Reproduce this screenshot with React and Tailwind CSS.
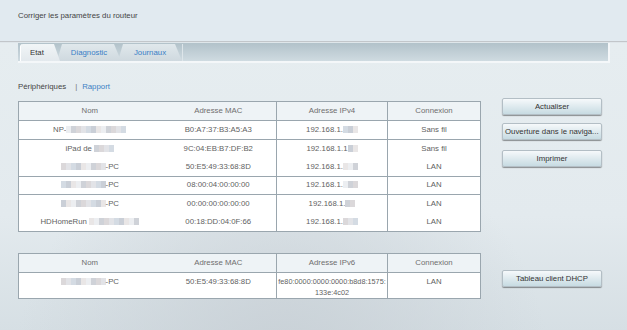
import React from "react";

const shades = [
    "bg-[#e2e3e7]",
    "bg-[#cfd2d8]",
    "bg-[#e9e6e6]",
    "bg-[#d4dbe3]",
    "bg-[#dbd8da]",
    "bg-[#eceef1]",
    "bg-[#cacfd7]",
];

// pixelated (masked) part of a name or address
const Blur = ({ n, seed = 0 }) => (
    <span className="inline-flex align-[-1px] h-[7px]">
        {Array.from({ length: n }, (_, i) => (
            <span
                key={i}
                className={`w-[5px] h-full ${shades[(i * 3 + seed * 5) % shades.length]}`}
            />
        ))}
    </span>
);

const Name = ({ pre, blur, post, seed }) => (
    <span className="whitespace-nowrap">
        {pre}
        <Blur n={blur} seed={seed} />
        {post}
    </span>
);

const Ip = ({ tail, n = 3, seed }) => (
    <span className="whitespace-nowrap">
        192.168.1.{tail}
        <Blur n={n} seed={seed} />
    </span>
);

const groups = [
    [
        {
            name: <Name pre="NP-" blur={12} seed={1} />,
            mac: "B0:A7:37:B3:A5:A3",
            ip: <Ip n={3} seed={2} />,
            conn: "Sans fil",
        },
    ],
    [
        {
            name: <Name pre="iPad de " blur={4} seed={3} />,
            mac: "9C:04:EB:B7:DF:B2",
            ip: <Ip tail="1" n={2} seed={4} />,
            conn: "Sans fil",
        },
        {
            name: <Name blur={9} post="-PC" seed={5} />,
            mac: "50:E5:49:33:68:8D",
            ip: <Ip n={3} seed={6} />,
            conn: "LAN",
        },
    ],
    [
        {
            name: <Name blur={9} post="-PC" seed={2} />,
            mac: "08:00:04:00:00:00",
            ip: <Ip n={3} seed={1} />,
            conn: "LAN",
        },
    ],
    [
        {
            name: <Name blur={9} post="-PC" seed={4} />,
            mac: "00:00:00:00:00:00",
            ip: <Ip n={2} seed={3} />,
            conn: "LAN",
        },
        {
            name: <Name pre="HDHomeRun " blur={10} seed={6} />,
            mac: "00:18:DD:04:0F:66",
            ip: <Ip n={3} seed={5} />,
            conn: "LAN",
        },
    ],
];

const Button = ({ children, className = "" }) => (
    <button
        className={`w-[100px] h-[17px] rounded-[2px] border border-[#b3bec5] bg-gradient-to-b from-[#f6f9fb] to-[#c7dbe2] shadow-[0_1px_1px_rgba(0,0,0,0.4)] text-[#333] whitespace-nowrap overflow-hidden px-[2px] leading-[15px] ${className}`}
    >
        {children}
    </button>
);

const Cols = () => (
    <colgroup>
        <col className="w-[142px]" />
        <col className="w-[116px]" />
        <col className="w-[111px]" />
        <col className="w-[93px]" />
    </colgroup>
);

const Head = ({ ip }) => (
    <thead>
        <tr className="h-[19px] bg-[#eef3f6] text-[#6e6e6e]">
            <th className="font-normal">Nom</th>
            <th className="font-normal">Adresse MAC</th>
            <th className="font-normal border-l border-[#9aa6ae]">{ip}</th>
            <th className="font-normal border-l border-[#9aa6ae]">Connexion</th>
        </tr>
    </thead>
);

const Tab = ({ children, active }) => (
    <div
        className={
            active
                ? "relative z-10 w-[40px] h-[17px] pl-[9px] pt-[3px] rounded-tl-[3px] border-l border-white bg-gradient-to-b from-[#f1f5f7] to-[#e3e9ed] text-[#333] [clip-path:polygon(0_0,calc(100%_-_6px)_0,100%_100%,0_100%)]"
                : "w-[64px] h-[17px] pt-[3px] text-center -ml-[3px] bg-gradient-to-b from-[#e0e8ec] to-[#cfd9df] text-[#3a80c6] [clip-path:polygon(5px_0,calc(100%_-_7px)_0,100%_100%,0_100%)]"
        }
    >
        {children}
    </div>
);

export default function App() {
    return (
        <div className="w-[627px] h-[330px] overflow-hidden font-['Liberation_Sans',Arial,sans-serif] text-[7.8px] text-[#5f5f5f] bg-[#e6edf0]">
            <header className="h-[41px] bg-[#e1eaf0] pl-[18px] pt-[10px] text-[#444]">
                Corriger les paramètres du routeur
            </header>
            <div className="h-[1px] bg-[#c2c6ca]" />
            <div className="h-[1px] bg-[#dfe6ea]" />

            <div className="h-[288px] bg-[radial-gradient(ellipse_at_45%_115%,#c8d0d6_0%,rgba(200,208,214,0)_55%),linear-gradient(to_bottom,#e6edf0_0%,#e3eaee_60%,#d6dfe4_100%)]">
                <div className="pl-[18px] pr-[17px]">
                    <div className="h-[20px] flex items-end pl-[2px] border-b-2 border-r-2 border-[#f4f7f9] bg-gradient-to-b from-[#b2c2ca] to-[#cfdbe1]">
                        <Tab active>Etat</Tab>
                        <Tab>Diagnostic</Tab>
                        <Tab>Journaux</Tab>
                        <div className="w-[1px] h-[17px] bg-[#dde5e9]" />
                    </div>
                </div>

                <div className="px-[18px]">
                    <div className="mt-[19px] h-[9px] flex items-center text-[#444]">
                        <span>Périphériques</span>
                        <span className="ml-[9px] text-[#777]">|</span>
                        <span className="ml-[5px] text-[#3b7fc4]">Rapport</span>
                    </div>

                    <div className="flex items-start mt-[4px]">
                        <table className="mt-[6px] w-[462px] table-fixed border-collapse border border-[#9aa6ae] bg-white text-center">
                            <Cols />
                            <Head ip="Adresse IPv4" />
                            {groups.map((g, gi) => (
                                <tbody key={gi} className="border-t border-[#9aa6ae]">
                                    {g.map((r, ri) => (
                                        <tr key={ri} className="h-[18.5px]">
                                            <td>{r.name}</td>
                                            <td>{r.mac}</td>
                                            <td className="border-l border-[#9aa6ae]">{r.ip}</td>
                                            <td className="border-l border-[#9aa6ae]">{r.conn}</td>
                                        </tr>
                                    ))}
                                </tbody>
                            ))}
                        </table>

                        <div className="ml-[21px] mt-[3px] flex flex-col">
                            <Button>Actualiser</Button>
                            <Button className="mt-[8px] text-left">
                                Ouverture dans le naviga...
                            </Button>
                            <Button className="mt-[10px]">Imprimer</Button>
                        </div>
                    </div>

                    <div className="flex items-start mt-[21px]">
                        <table className="w-[462px] table-fixed border-collapse border border-[#9aa6ae] bg-white text-center">
                            <Cols />
                            <Head ip="Adresse IPv6" />
                            <tbody className="border-t border-[#9aa6ae]">
                                <tr>
                                    <td className="align-top pt-[3px] pb-[3px] leading-[11px]">
                                        <Name blur={9} post="-PC" seed={5} />
                                    </td>
                                    <td className="align-top pt-[3px] leading-[11px]">
                                        50:E5:49:33:68:8D
                                    </td>
                                    <td className="align-top pt-[3px] leading-[11px] border-l border-[#9aa6ae] text-[7.3px] whitespace-nowrap">
                                        fe80:0000:0000:0000:b8d8:1575:
                                        <br />
                                        133e:4c02
                                    </td>
                                    <td className="align-top pt-[3px] leading-[11px] border-l border-[#9aa6ae]">
                                        LAN
                                    </td>
                                </tr>
                            </tbody>
                        </table>

                        <div className="ml-[21px] mt-[17px]">
                            <Button>Tableau client DHCP</Button>
                        </div>
                    </div>
                </div>
            </div>
        </div>
    );
}
